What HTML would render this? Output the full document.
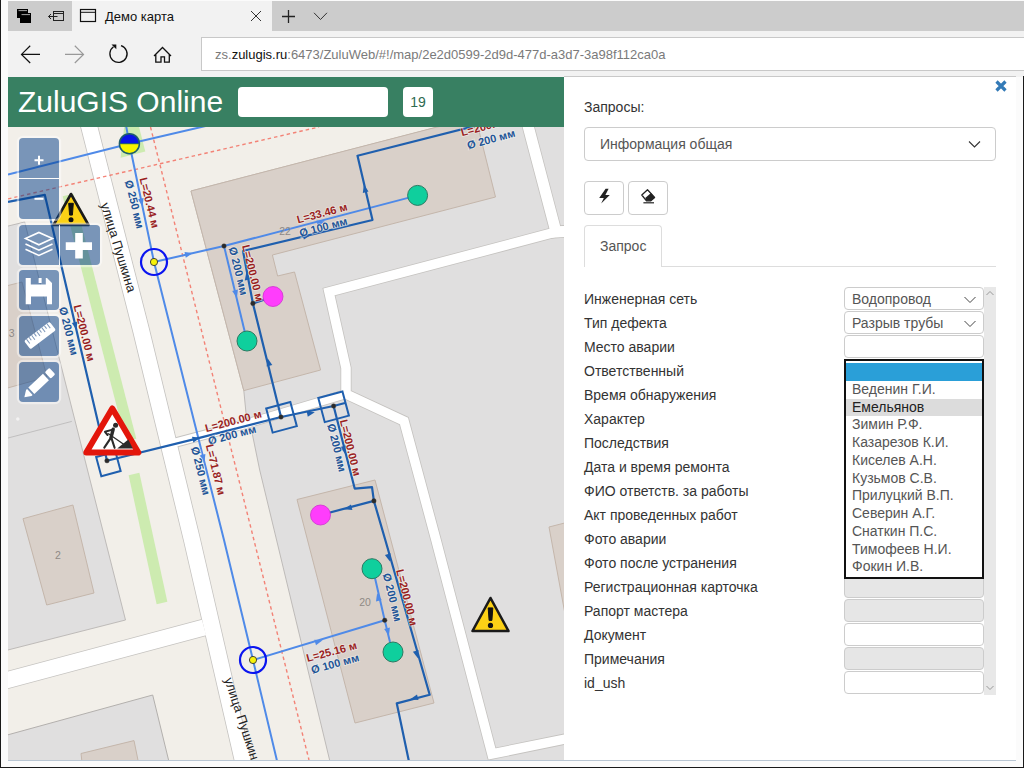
<!DOCTYPE html>
<html><head><meta charset="utf-8">
<style>
*{box-sizing:border-box}
html,body{margin:0;padding:0;width:1024px;height:768px;overflow:hidden;background:#fbfbfb;font-family:"Liberation Sans",sans-serif;}
.abs{position:absolute}
#tabbar{left:8px;top:1px;width:1016px;height:30px;background:#cccccc}
#acttab{left:72px;top:1px;width:200px;height:30px;background:#f2f2f2}
#nav{left:8px;top:31px;width:1016px;height:46px;background:#f2f2f2}
#addr{left:201px;top:37px;width:830px;height:34px;background:#fff;border:1px solid #c8c8c8;border-right:none}
#url{left:215px;top:47px;font-size:13px;color:#7a7a7a;white-space:nowrap;line-height:16px}
#url b{font-weight:normal;color:#111}
#header{left:8px;top:77px;width:556px;height:50px;background:#388062}
#logo{left:18px;top:84px;font-size:30px;color:#fff;line-height:36px;white-space:nowrap}
#search{left:238px;top:87px;width:150px;height:30px;background:#fff;border-radius:4px}
#cnt{left:403px;top:87px;width:30px;height:30px;background:#fff;border-radius:4px;font-size:14px;color:#2e6a50;text-align:center;line-height:30px}
#map{left:8px;top:127px;width:556px;height:633px;overflow:hidden;background:#f2efe9}
#panel{left:564px;top:76px;width:452px;height:684px;background:#fff;border-top:1px solid #c9c9c9}
#bottomline{left:8px;top:760px;width:1008px;height:1px;background:#b9c6d3}
#frameL{left:0;top:0;width:1px;height:768px;background:#1a1a1a}
#frameB{left:0;top:767px;width:1024px;height:1px;background:#1a1a1a}
#frameR{left:1023px;top:76px;width:1px;height:692px;background:#1a1a1a}
.lbl{position:absolute;left:584px;font-size:14px;color:#333;line-height:16px;white-space:nowrap}
.inp{position:absolute;left:844px;width:140px;height:23px;background:#fff;border:1px solid #ccc;border-radius:4px}
.inp.g{background:#e6e6e6}
.sel{font-size:14px;color:#555;line-height:21px;padding-top:1px;padding-left:7px;white-space:nowrap}
.btn{width:40px;height:34px;border:1px solid #ccc;border-radius:4px;background:#fff}
.chev{position:absolute;right:7px;top:8px}
#dd{left:844px;top:359px;width:140px;height:220px;border:2px solid #111;background:#fff}
.opt{position:absolute;left:0;width:136px;height:17.75px;font-size:14px;line-height:16.5px;color:#555;padding-left:6px;white-space:nowrap}
.opt.sel0{background:#2a9fd8;top:2px}
.opt.hov{background:#dcdcdc;color:#222}
</style></head><body>
<div id="frameL" class="abs"></div>
<div id="tabbar" class="abs"></div>
<div id="acttab" class="abs"></div>
<div id="nav" class="abs"></div>
<div id="addr" class="abs"></div>
<div id="url" class="abs">zs.<b>zulugis.ru</b>:6473/ZuluWeb/#!/map/2e2d0599-2d9d-477d-a3d7-3a98f112ca0a</div>
<div class="abs" style="left:105px;top:9px;font-size:13px;color:#111;line-height:15px;white-space:nowrap">Демо карта</div>

<svg class="abs" style="left:0;top:0" width="340" height="76" viewBox="0 0 340 76">
 <!-- tab group icon -->
 <rect x="17.5" y="9.5" width="10" height="8" fill="#000" stroke="#000" stroke-width="1"/>
 <rect x="20.5" y="13.5" width="10" height="9" fill="#000" stroke="#000" stroke-width="1"/>
 <line x1="18.5" y1="10.6" x2="27" y2="10.6" stroke="#ccc" stroke-width="0.8"/>
 <line x1="21.5" y1="14.6" x2="30" y2="14.6" stroke="#ccc" stroke-width="0.8"/>
 <!-- set aside icon -->
 <rect x="53.5" y="11.5" width="10" height="9" fill="none" stroke="#222" stroke-width="1"/>
 <line x1="53.5" y1="13.5" x2="63.5" y2="13.5" stroke="#222" stroke-width="1"/>
 <line x1="48.5" y1="16.5" x2="57.5" y2="16.5" stroke="#222" stroke-width="1"/>
 <polyline points="51,14 48.5,16.5 51,19" fill="none" stroke="#222" stroke-width="1"/>
 <!-- favicon -->
 <rect x="80.5" y="9.5" width="15" height="12" fill="none" stroke="#111" stroke-width="1.2"/>
 <line x1="80.5" y1="12.3" x2="95.5" y2="12.3" stroke="#111" stroke-width="1"/>
 <!-- tab close -->
 <path d="M251 11 L261 21 M261 11 L251 21" stroke="#333" stroke-width="1"/>
 <!-- plus -->
 <path d="M282 16.5 H295 M288.5 10 V23" stroke="#222" stroke-width="1.3"/>
 <!-- chevron -->
 <polyline points="314,12.8 320.5,19.5 327,12.8" fill="none" stroke="#333" stroke-width="1"/>
 <!-- back -->
 <path d="M21.5 54.4 H40 M30.2 45.8 L21.5 54.4 L30.2 63" fill="none" stroke="#111" stroke-width="1.2"/>
 <!-- forward -->
 <path d="M65 54.4 H83.5 M74.8 45.8 L83.5 54.4 L74.8 63" fill="none" stroke="#999" stroke-width="1.2"/>
 <!-- refresh -->
 <path d="M121 45.6 A8.6 8.6 0 1 1 113.5 46.8" fill="none" stroke="#111" stroke-width="1.3"/>
 <polygon points="111.5,44.6 116.3,44.6 116.3,49.2" fill="#111"/>
 <!-- home -->
 <path d="M154 56 L162.5 47.5 L171 56 M155.8 54.5 V62.2 H161 V56.8 H164.5 V62.2 H169.3 V54.5" fill="none" stroke="#111" stroke-width="1.3"/>
</svg>

<div id="header" class="abs"></div>
<div id="logo" class="abs">ZuluGIS Online</div>
<div id="search" class="abs"></div>
<div id="cnt" class="abs">19</div>

<div id="map" class="abs"><svg id="mapsvg" width="556" height="633" viewBox="8 127 556 633" style="position:absolute;left:0;top:0;font-family:Liberation Sans,sans-serif">
<rect x="8" y="127" width="557" height="633" fill="#f2efe9"/>
<polygon points="0.0,228.0 24.7,222.0 125.5,620.0 0.0,652.0" fill="#e0dfdf" stroke="#b9b6b3" stroke-width="0.9"/>
<polygon points="191.0,191.0 461.0,121.0 570.0,121.0 570.0,770.0 332.0,770.0 259.7,470.0 252.0,432.5 246.0,413.0 243.8,390.6" fill="#e0dfdf" stroke="#b9b6b3" stroke-width="0.9"/>
<polygon points="0.0,737.0 152.7,695.0 171.0,770.0 0.0,770.0" fill="#e0dfdf" stroke="#b3b0ad" stroke-width="1"/>
<line x1="8" y1="438" x2="71.8" y2="421.4" stroke="#b8b6b6" stroke-width="0.8"/>
<polygon points="191.0,191.0 437.0,127.0 476.3,120.0 495.5,197.0 272.4,255.0 277.6,276.0 294.5,272.0 320.6,370.0 243.8,390.6" fill="#d9d0c9" stroke="#c4b6ab" stroke-width="1" />
<polygon points="297.0,499.5 375.0,480.0 434.0,703.0 355.0,723.0" fill="#d9d0c9" stroke="#c4b6ab" stroke-width="1" />
<polygon points="23.0,518.7 72.9,505.0 94.0,593.0 46.7,605.0" fill="#d9d0c9" stroke="#c4b6ab" stroke-width="1" />
<polygon points="4.0,286.5 22.0,282.0 47.0,377.0 4.0,389.0" fill="#d9d0c9" stroke="#c4b6ab" stroke-width="1" />
<polygon points="549.0,527.0 600.0,514.0 620.0,600.0 565.0,614.0" fill="#d9d0c9" stroke="#c4b6ab" stroke-width="1" />
<polygon points="81.0,753.5 134.0,740.6 140.0,770.0 84.0,780.0" fill="#d9d0c9" stroke="#c4b6ab" stroke-width="1" />
<line x1="68" y1="195" x2="131" y2="440" stroke="#cdebb0" stroke-width="11"/>
<line x1="134" y1="474" x2="162" y2="603" stroke="#cdebb0" stroke-width="11"/>
<polygon points="120.6,157.8 145.3,151.6 137.3,120.0 125.0,120.0" fill="#cdebb0"/>
<polyline points="87.5,120.0 141.0,330.0 192.0,540.0 245.0,770.0" fill="none" stroke="#c5c3c0" stroke-width="17.6" stroke-linejoin="miter"/>
<polyline points="526.5,120.0 556.0,232.0 570.0,231.0" fill="none" stroke="#c5c3c0" stroke-width="12.6" stroke-linejoin="miter"/>
<polyline points="570.0,230.0 556.0,232.0 329.0,292.0 346.0,368.0 346.0,394.0 404.0,421.0 436.0,540.0 492.0,754.0 570.0,738.0" fill="none" stroke="#c5c3c0" stroke-width="11.1" stroke-linejoin="miter"/>
<polyline points="346.0,394.0 242.0,425.0 170.0,444.0" fill="none" stroke="#c5c3c0" stroke-width="10.1" stroke-linejoin="miter"/>
<polyline points="0.0,682.0 204.0,627.5" fill="none" stroke="#c5c3c0" stroke-width="17.6" stroke-linejoin="miter"/>
<polyline points="87.5,120.0 141.0,330.0 192.0,540.0 245.0,770.0" fill="none" stroke="#ffffff" stroke-width="16" stroke-linejoin="miter"/>
<polyline points="526.5,120.0 556.0,232.0 570.0,231.0" fill="none" stroke="#ffffff" stroke-width="11" stroke-linejoin="miter"/>
<polyline points="570.0,230.0 556.0,232.0 329.0,292.0 346.0,368.0 346.0,394.0 404.0,421.0 436.0,540.0 492.0,754.0 570.0,738.0" fill="none" stroke="#ffffff" stroke-width="9.5" stroke-linejoin="miter"/>
<polyline points="346.0,394.0 242.0,425.0 170.0,444.0" fill="none" stroke="#ffffff" stroke-width="8.5" stroke-linejoin="miter"/>
<polyline points="0.0,682.0 204.0,627.5" fill="none" stroke="#ffffff" stroke-width="16" stroke-linejoin="miter"/>
<line x1="150.5" y1="127" x2="309" y2="760" stroke="#f4776a" stroke-width="1.4" stroke-dasharray="3.5 3" opacity="0.9"/>
<line x1="8" y1="198.9" x2="319" y2="127" stroke="#f4776a" stroke-width="1.4" stroke-dasharray="3.5 3" opacity="0.9"/>
<polyline points="8.0,174.5 129.4,143.7 210.0,125.0" fill="none" stroke="#4f8ae8" stroke-width="2" stroke-linejoin="round"/>
<polyline points="125.0,120.0 129.4,143.7 154.0,262.0 224.0,540.0 253.0,660.0 278.0,765.0" fill="none" stroke="#4f8ae8" stroke-width="2" stroke-linejoin="round"/>
<polyline points="154.0,262.0 224.0,246.0 417.6,195.4" fill="none" stroke="#4f8ae8" stroke-width="2" stroke-linejoin="round"/>
<polyline points="224.0,246.0 247.0,341.0" fill="none" stroke="#4f8ae8" stroke-width="2" stroke-linejoin="round"/>
<polyline points="253.0,660.0 384.7,620.3" fill="none" stroke="#4f8ae8" stroke-width="2" stroke-linejoin="round"/>
<polyline points="375.0,578.0 384.7,620.3 390.0,642.0" fill="none" stroke="#4f8ae8" stroke-width="2" stroke-linejoin="round"/>
<polyline points="8.0,201.9 44.8,194.8 107.0,460.7" fill="none" stroke="#1f5fae" stroke-width="2.2" stroke-linejoin="round"/>
<polyline points="107.0,460.7 196.5,438.6 281.0,417.0 333.6,406.0 345.0,403.0" fill="none" stroke="#1f5fae" stroke-width="2.2" stroke-linejoin="round"/>
<polyline points="281.0,417.0 252.9,303.4 243.0,251.0 372.5,220.0 357.5,155.7 480.0,124.7" fill="none" stroke="#1f5fae" stroke-width="2.2" stroke-linejoin="round"/>
<polyline points="252.9,303.4 272.4,296.9" fill="none" stroke="#1f5fae" stroke-width="2.2" stroke-linejoin="round"/>
<polyline points="333.6,406.0 354.7,488.6 372.0,487.2 373.9,500.9 385.3,540.0 429.7,694.8 396.8,703.4 409.7,765.0" fill="none" stroke="#1f5fae" stroke-width="2.2" stroke-linejoin="round"/>
<polyline points="373.9,500.9 320.5,515.0" fill="none" stroke="#1f5fae" stroke-width="2.2" stroke-linejoin="round"/>
<polygon points="142.4,206.3 137.9,199.3 143.7,198.1" fill="#4f8ae8"/>
<polygon points="192.8,253.1 185.8,257.7 184.5,252.0" fill="#4f8ae8"/>
<polygon points="236.9,297.8 232.2,290.9 237.9,289.5" fill="#4f8ae8"/>
<polygon points="322.6,640.3 316.0,645.3 314.3,639.7" fill="#4f8ae8"/>
<polygon points="204.5,462.3 199.7,455.4 205.4,454.0" fill="#4f8ae8"/>
<polygon points="324.8,221.5 317.9,226.3 316.5,220.6" fill="#4f8ae8"/>
<polygon points="377.1,593.2 381.7,600.1 376.0,601.5" fill="#4f8ae8"/>
<polygon points="388.9,635.8 384.2,628.9 389.9,627.5" fill="#4f8ae8"/>
<polygon points="76.4,329.8 71.8,322.9 77.5,321.5" fill="#1f5fae"/>
<polygon points="200.3,437.7 193.4,442.4 192.0,436.7" fill="#1f5fae"/>
<polygon points="314.8,412.2 307.8,416.7 306.6,410.9" fill="#1f5fae"/>
<polygon points="267.6,358.2 272.3,365.1 266.6,366.5" fill="#1f5fae"/>
<polygon points="246.3,272.2 250.6,279.3 244.8,280.4" fill="#1f5fae"/>
<polygon points="310.8,234.9 303.9,239.6 302.5,233.9" fill="#1f5fae"/>
<polygon points="363.9,184.7 368.5,191.6 362.8,193.0" fill="#1f5fae"/>
<polygon points="345.0,453.8 340.2,446.9 345.9,445.5" fill="#1f5fae"/>
<polygon points="344.1,509.3 350.9,504.5 352.4,510.1" fill="#1f5fae"/>
<polygon points="389.9,561.5 384.9,554.9 390.5,553.2" fill="#1f5fae"/>
<polygon points="417.9,658.3 412.9,651.7 418.5,650.0" fill="#1f5fae"/>
<polygon points="410.2,699.2 417.0,694.4 418.5,700.0" fill="#1f5fae"/>
<rect x="98.4" y="454.0" width="20" height="20" fill="none" stroke="#1f5fae" stroke-width="2" transform="rotate(-15 108.4 464)"/>
<rect x="269.0" y="404.8" width="25" height="25" fill="none" stroke="#1f5fae" stroke-width="2" transform="rotate(-15 281.5 417.3)"/>
<rect x="321.1" y="394.3" width="25" height="25" fill="none" stroke="#1f5fae" stroke-width="2" transform="rotate(-15 333.6 406.8)"/>
<circle cx="417.6" cy="195.4" r="10" fill="#0fcf9d" stroke="#2a7a62" stroke-width="1"/>
<circle cx="247" cy="341" r="10" fill="#0fcf9d" stroke="#2a7a62" stroke-width="1"/>
<circle cx="372" cy="568.7" r="10" fill="#0fcf9d" stroke="#2a7a62" stroke-width="1"/>
<circle cx="393" cy="652" r="10" fill="#0fcf9d" stroke="#2a7a62" stroke-width="1"/>
<circle cx="273" cy="296.5" r="10" fill="#ff3dfc" stroke="#d02fd0" stroke-width="0.8"/>
<circle cx="320.5" cy="515" r="10" fill="#ff3dfc" stroke="#d02fd0" stroke-width="0.8"/>
<circle cx="154" cy="262" r="13" fill="none" stroke="#0a14f0" stroke-width="2.2"/>
<circle cx="154" cy="262" r="3.6" fill="#f6f20a" stroke="#333" stroke-width="0.9"/>
<circle cx="253" cy="660" r="13" fill="none" stroke="#0a14f0" stroke-width="2.2"/>
<circle cx="253" cy="660" r="3.6" fill="#f6f20a" stroke="#333" stroke-width="0.9"/>
<g><circle cx="129.4" cy="143.7" r="10" fill="#f7f300"/><path d="M119.4 143.7 A10 10 0 0 1 139.4 143.7 Z" fill="#0a14e6"/><circle cx="129.4" cy="143.7" r="10" fill="none" stroke="#1e5e6e" stroke-width="1.5"/><line x1="119.4" y1="143.7" x2="139.4" y2="143.7" stroke="#1e5e6e" stroke-width="1"/></g>
<circle cx="224" cy="246" r="2.3" fill="#2a2a2a" stroke="#444" stroke-width="0.4"/>
<circle cx="252.9" cy="303.4" r="2.3" fill="#2a2a2a" stroke="#444" stroke-width="0.4"/>
<circle cx="281" cy="417" r="2.3" fill="#2a2a2a" stroke="#444" stroke-width="0.4"/>
<circle cx="333.6" cy="406" r="2.3" fill="#2a2a2a" stroke="#444" stroke-width="0.4"/>
<circle cx="373.9" cy="500.9" r="2.3" fill="#2a2a2a" stroke="#444" stroke-width="0.4"/>
<circle cx="384.7" cy="620.3" r="2.3" fill="#2a2a2a" stroke="#444" stroke-width="0.4"/>
<circle cx="107" cy="460.7" r="2.3" fill="#2a2a2a" stroke="#444" stroke-width="0.4"/>
<text x="149.6" y="202.6" fill="#9a1f1f" font-size="11" font-weight="bold" text-anchor="middle" dominant-baseline="central" transform="rotate(76 149.6 202.6)" style="paint-order:stroke" stroke="#f7f5f0" stroke-width="1.5" stroke-opacity="0.6">L=20.44 м</text>
<text x="134.7" y="204.3" fill="#1f5597" font-size="11" font-weight="bold" text-anchor="middle" dominant-baseline="central" transform="rotate(76 134.7 204.3)" style="paint-order:stroke" stroke="#f7f5f0" stroke-width="1.5" stroke-opacity="0.6">Ø 250 мм</text>
<text x="322" y="213" fill="#9a1f1f" font-size="11" font-weight="bold" text-anchor="middle" dominant-baseline="central" transform="rotate(-15 322 213)" style="paint-order:stroke" stroke="#f7f5f0" stroke-width="1.5" stroke-opacity="0.6">L=33.46 м</text>
<text x="323.3" y="226.8" fill="#1f5597" font-size="11" font-weight="bold" text-anchor="middle" dominant-baseline="central" transform="rotate(-15 323.3 226.8)" style="paint-order:stroke" stroke="#f7f5f0" stroke-width="1.5" stroke-opacity="0.6">Ø 100 мм</text>
<text x="489" y="125" fill="#9a1f1f" font-size="11" font-weight="bold" text-anchor="middle" dominant-baseline="central" transform="rotate(-15 489 125)" style="paint-order:stroke" stroke="#f7f5f0" stroke-width="1.5" stroke-opacity="0.6">L=200.00 м</text>
<text x="491" y="139" fill="#1f5597" font-size="11" font-weight="bold" text-anchor="middle" dominant-baseline="central" transform="rotate(-15 491 139)" style="paint-order:stroke" stroke="#f7f5f0" stroke-width="1.5" stroke-opacity="0.6">Ø 200 мм</text>
<text x="253" y="273" fill="#9a1f1f" font-size="11" font-weight="bold" text-anchor="middle" dominant-baseline="central" transform="rotate(76 253 273)" style="paint-order:stroke" stroke="#f7f5f0" stroke-width="1.5" stroke-opacity="0.6">L=200.00 м</text>
<text x="238.5" y="271" fill="#1f5597" font-size="11" font-weight="bold" text-anchor="middle" dominant-baseline="central" transform="rotate(76 238.5 271)" style="paint-order:stroke" stroke="#f7f5f0" stroke-width="1.5" stroke-opacity="0.6">Ø 200 мм</text>
<text x="233.3" y="420.8" fill="#9a1f1f" font-size="11" font-weight="bold" text-anchor="middle" dominant-baseline="central" transform="rotate(-15 233.3 420.8)" style="paint-order:stroke" stroke="#f7f5f0" stroke-width="1.5" stroke-opacity="0.6">L=200.00 м</text>
<text x="232" y="434.8" fill="#1f5597" font-size="11" font-weight="bold" text-anchor="middle" dominant-baseline="central" transform="rotate(-15 232 434.8)" style="paint-order:stroke" stroke="#f7f5f0" stroke-width="1.5" stroke-opacity="0.6">Ø 200 мм</text>
<text x="215.8" y="469.5" fill="#9a1f1f" font-size="11" font-weight="bold" text-anchor="middle" dominant-baseline="central" transform="rotate(76 215.8 469.5)" style="paint-order:stroke" stroke="#f7f5f0" stroke-width="1.5" stroke-opacity="0.6">L=71.87 м</text>
<text x="200.8" y="470.8" fill="#1f5597" font-size="11" font-weight="bold" text-anchor="middle" dominant-baseline="central" transform="rotate(76 200.8 470.8)" style="paint-order:stroke" stroke="#f7f5f0" stroke-width="1.5" stroke-opacity="0.6">Ø 250 мм</text>
<text x="350.6" y="447.6" fill="#9a1f1f" font-size="11" font-weight="bold" text-anchor="middle" dominant-baseline="central" transform="rotate(76 350.6 447.6)" style="paint-order:stroke" stroke="#f7f5f0" stroke-width="1.5" stroke-opacity="0.6">L=200.00 м</text>
<text x="337" y="447.6" fill="#1f5597" font-size="11" font-weight="bold" text-anchor="middle" dominant-baseline="central" transform="rotate(76 337 447.6)" style="paint-order:stroke" stroke="#f7f5f0" stroke-width="1.5" stroke-opacity="0.6">Ø 200 мм</text>
<text x="407" y="597.3" fill="#9a1f1f" font-size="11" font-weight="bold" text-anchor="middle" dominant-baseline="central" transform="rotate(76 407 597.3)" style="paint-order:stroke" stroke="#f7f5f0" stroke-width="1.5" stroke-opacity="0.6">L=200.00 м</text>
<text x="392.5" y="597.3" fill="#1f5597" font-size="11" font-weight="bold" text-anchor="middle" dominant-baseline="central" transform="rotate(76 392.5 597.3)" style="paint-order:stroke" stroke="#f7f5f0" stroke-width="1.5" stroke-opacity="0.6">Ø 200 мм</text>
<text x="331.5" y="651.5" fill="#9a1f1f" font-size="11" font-weight="bold" text-anchor="middle" dominant-baseline="central" transform="rotate(-15 331.5 651.5)" style="paint-order:stroke" stroke="#f7f5f0" stroke-width="1.5" stroke-opacity="0.6">L=25.16 м</text>
<text x="335" y="663.5" fill="#1f5597" font-size="11" font-weight="bold" text-anchor="middle" dominant-baseline="central" transform="rotate(-15 335 663.5)" style="paint-order:stroke" stroke="#f7f5f0" stroke-width="1.5" stroke-opacity="0.6">Ø 100 мм</text>
<text x="84.5" y="332.9" fill="#9a1f1f" font-size="11" font-weight="bold" text-anchor="middle" dominant-baseline="central" transform="rotate(76 84.5 332.9)" style="paint-order:stroke" stroke="#f7f5f0" stroke-width="1.5" stroke-opacity="0.6">L=200.00 м</text>
<text x="68.9" y="331" fill="#1f5597" font-size="11" font-weight="bold" text-anchor="middle" dominant-baseline="central" transform="rotate(76 68.9 331)" style="paint-order:stroke" stroke="#f7f5f0" stroke-width="1.5" stroke-opacity="0.6">Ø 200 мм</text>
<text x="118.5" y="247.5" fill="#222" font-size="13" text-anchor="middle" dominant-baseline="central" transform="rotate(73 118.5 247.5)">улица Пушкина</text>
<text x="243" y="722" fill="#222" font-size="13" text-anchor="middle" dominant-baseline="central" transform="rotate(72 243 722)">улица Пушкина</text>
<text x="285" y="231" fill="#8f8a86" font-size="10.5" text-anchor="middle" dominant-baseline="central">22</text>
<text x="365" y="601.6" fill="#8f8a86" font-size="10.5" text-anchor="middle" dominant-baseline="central">20</text>
<text x="58" y="555" fill="#8f8a86" font-size="10.5" text-anchor="middle" dominant-baseline="central">2</text>
<text x="11.6" y="333" fill="#8f8a86" font-size="10.5" text-anchor="middle" dominant-baseline="central">3</text>
<polygon points="71.0,194.0 88.5,225.0 53.5,225.0" fill="#fcd116" stroke="#1a1a1a" stroke-width="2.6" stroke-linejoin="round"/>
<path d="M68.7 203.3 L73.3 203.3 L72.4 215.1 L69.6 215.1 Z" fill="#111" stroke="#111" stroke-width="1" stroke-linejoin="round"/>
<circle cx="71" cy="219.7" r="2.5" fill="#111"/>
<polygon points="490.5,598.0 508.5,631.0 472.5,631.0" fill="#fcd116" stroke="#1a1a1a" stroke-width="2.6" stroke-linejoin="round"/>
<path d="M488.2 607.9 L492.8 607.9 L491.9 620.4 L489.1 620.4 Z" fill="#111" stroke="#111" stroke-width="1" stroke-linejoin="round"/>
<circle cx="490.5" cy="625.4" r="2.6" fill="#111"/>
<polygon points="112.3,408.5 138.3,452.6 86.3,452.6" fill="#fff" stroke="#e3160b" stroke-width="6" stroke-linejoin="round"/>
<g stroke="#2b2b2b" fill="none" stroke-linecap="round" stroke-linejoin="round"><circle cx="115.6" cy="425.3" r="2.5" fill="#2b2b2b" stroke="none"/><path d="M113.2 429.2 L111 437.6" stroke-width="3.4"/><path d="M112.6 429.6 L105 431.8 L107.6 435" stroke-width="2"/><path d="M111 437.6 L104.3 447.6 M111.3 437.6 L114.6 447.8" stroke-width="2.1"/><path d="M108.5 433.8 L124 444.5" stroke-width="1.3"/><polygon points="117.2,448.4 132.8,448.4 128.3,439.6" fill="#2b2b2b" stroke="none"/></g>
<rect x="18" y="137" width="42" height="83" rx="5" fill="none" stroke="rgba(255,255,255,0.45)" stroke-width="2.5"/>
<path d="M19 142 a4 4 0 0 1 4 -4 h32 a4 4 0 0 1 4 4 v36 h-40 z" fill="rgba(0,60,136,0.5)"/>
<path d="M19 179 h40 v36 a4 4 0 0 1 -4 4 h-32 a4 4 0 0 1 -4 -4 z" fill="rgba(0,60,136,0.5)"/>
<line x1="19" y1="178.5" x2="59" y2="178.5" stroke="rgba(255,255,255,0.8)" stroke-width="1"/>
<path d="M34.5 160.2 H43.5 M39 155.7 V164.7" stroke="#fff" stroke-width="2"/>
<path d="M34.5 198.8 H43.5" stroke="#fff" stroke-width="2"/>
<rect x="18" y="224" width="83" height="42" rx="5" fill="none" stroke="rgba(255,255,255,0.45)" stroke-width="2.5"/>
<path d="M19 229 a4 4 0 0 1 4 -4 h36 v40 h-36 a4 4 0 0 1 -4 -4 z" fill="rgba(0,60,136,0.5)"/>
<path d="M60 225 h36 a4 4 0 0 1 4 4 v32 a4 4 0 0 1 -4 4 h-36 z" fill="rgba(0,60,136,0.5)"/>
<line x1="59.5" y1="225" x2="59.5" y2="265" stroke="rgba(255,255,255,0.8)" stroke-width="1"/>
<path d="M25.5 238.6 L38.9 232.4 L52.5 238.6 L38.9 244.8 Z" fill="none" stroke="#fff" stroke-width="1.6" stroke-linejoin="miter"/>
<path d="M25.5 244 L38.9 250.2 L52.5 244" fill="none" stroke="#fff" stroke-width="1.6"/>
<path d="M25.5 249.2 L38.9 255.4 L52.5 249.2" fill="none" stroke="#fff" stroke-width="1.6"/>
<path d="M79 233 V258.6 M65.75 246.1 H92" stroke="#fff" stroke-width="7.6"/>
<rect x="18" y="269" width="42" height="42" rx="5" fill="none" stroke="rgba(255,255,255,0.45)" stroke-width="2.5"/>
<rect x="19" y="270" width="40" height="40" rx="4" fill="rgba(0,60,136,0.5)"/>
<path fill-rule="evenodd" fill="#fff" d="M25.7 278 H47 L52 283 V304.3 H25.7 Z M30.8 278 V284.5 H45.8 V278 Z M31 296.5 V304.3 H47 V296.5 Z"/>
<rect x="38.6" y="278" width="3" height="5" fill="#fff"/>
<rect x="18" y="315" width="42" height="42" rx="5" fill="none" stroke="rgba(255,255,255,0.45)" stroke-width="2.5"/>
<rect x="19" y="316" width="40" height="40" rx="4" fill="rgba(0,60,136,0.5)"/>
<g transform="translate(40 335.5) rotate(-37)"><rect x="-16" y="-5.2" width="32" height="10.4" rx="1.5" fill="#fff"/><line x1="-13.0" y1="-5.2" x2="-13.0" y2="0.3" stroke="#7b95b8" stroke-width="1"/><line x1="-9.8" y1="-5.2" x2="-9.8" y2="-1.5" stroke="#7b95b8" stroke-width="1"/><line x1="-6.6" y1="-5.2" x2="-6.6" y2="0.3" stroke="#7b95b8" stroke-width="1"/><line x1="-3.4" y1="-5.2" x2="-3.4" y2="-1.5" stroke="#7b95b8" stroke-width="1"/><line x1="-0.2" y1="-5.2" x2="-0.2" y2="0.3" stroke="#7b95b8" stroke-width="1"/><line x1="3.0" y1="-5.2" x2="3.0" y2="-1.5" stroke="#7b95b8" stroke-width="1"/><line x1="6.2" y1="-5.2" x2="6.2" y2="0.3" stroke="#7b95b8" stroke-width="1"/><line x1="9.4" y1="-5.2" x2="9.4" y2="-1.5" stroke="#7b95b8" stroke-width="1"/><line x1="12.6" y1="-5.2" x2="12.6" y2="0.3" stroke="#7b95b8" stroke-width="1"/></g>
<rect x="18" y="361" width="42" height="42" rx="5" fill="none" stroke="rgba(255,255,255,0.45)" stroke-width="2.5"/>
<rect x="19" y="362" width="40" height="40" rx="4" fill="rgba(0,60,136,0.5)"/>
<g transform="translate(39 383.5) rotate(-43)"><path d="M-20 0 L-14 -4 H-12.5 V4 H-14 Z" fill="#fff"/><rect x="-10.5" y="-4.4" width="20" height="8.8" fill="#fff"/><rect x="11.8" y="-4.4" width="6.5" height="8.8" rx="1.5" fill="#fff"/></g>
<circle cx="17.8" cy="419" r="1.8" fill="#fff" opacity="0.6"/>
</svg></div><!--endmap-->

<div id="panel" class="abs"></div>

<div class="abs" style="left:584px;top:99px;font-size:14px;color:#333;line-height:16px">Запросы:</div>
<div class="abs" style="left:584px;top:127px;width:412px;height:34px;border:1px solid #ccc;border-radius:4px;background:#fff"></div>
<div class="abs" style="left:600px;top:136px;font-size:14px;color:#555;line-height:16px">Информация общая</div>
<svg class="abs" style="left:968px;top:140px" width="14" height="9" viewBox="0 0 14 9"><polyline points="1,1.5 6.5,7 12,1.5" fill="none" stroke="#333" stroke-width="1.1"/></svg>
<div class="abs btn" style="left:584px;top:181px"></div>
<div class="abs btn" style="left:628px;top:181px"></div>
<svg class="abs" style="left:0;top:0;overflow:visible" width="1" height="1"><polygon points="605.6,188.8 608.6,188.8 605.4,194.9 609.8,194.9 601.2,203.4 603.8,197.9 599.2,197.9" fill="#222"/></svg>
<svg class="abs" style="left:0;top:0;overflow:visible" width="1" height="1"><path d="M641.8 195 L647.5 189.8 L654.6 197.4 L650.8 200.8 H646.5 Z" fill="#fff" stroke="#222" stroke-width="1.3" stroke-linejoin="round"/><path d="M645.2 198.1 L651 193 L654.6 197.4 L650.8 200.8 H646.5 Z" fill="#222"/><line x1="643.4" y1="202.8" x2="654" y2="202.8" stroke="#222" stroke-width="1.2"/></svg>
<div class="abs" style="left:584px;top:225px;width:78px;height:42px;border:1px solid #ddd;border-bottom:none;border-radius:4px 4px 0 0;background:#fff"></div>
<div class="abs" style="left:661px;top:266px;width:335px;height:1px;background:#ddd"></div>
<div class="abs" style="left:600px;top:238px;font-size:14px;color:#555;line-height:16px">Запрос</div>
<svg class="abs" style="left:994px;top:79px" width="14" height="14" viewBox="0 0 14 14"><path d="M2.5 2.5 L11.5 11.5 M11.5 2.5 L2.5 11.5" stroke="#337ab7" stroke-width="3.2" stroke-linecap="butt"/></svg>
<div class="abs" style="left:984px;top:287px;width:12px;height:408px;background:#e8e8e8"></div>
<svg class="abs" style="left:985px;top:289px" width="10" height="8" viewBox="0 0 10 8"><polyline points="1.5,6 5,2.5 8.5,6" fill="none" stroke="#999" stroke-width="1"/></svg>
<svg class="abs" style="left:985px;top:684px" width="10" height="8" viewBox="0 0 10 8"><polyline points="1.5,2 5,5.5 8.5,2" fill="none" stroke="#999" stroke-width="1"/></svg>
<div class="lbl" style="top:291px">Инженерная сеть</div>
<div class="lbl" style="top:315px">Тип дефекта</div>
<div class="lbl" style="top:339px">Место аварии</div>
<div class="lbl" style="top:363px">Ответственный</div>
<div class="lbl" style="top:387px">Время обнаружения</div>
<div class="lbl" style="top:411px">Характер</div>
<div class="lbl" style="top:435px">Последствия</div>
<div class="lbl" style="top:459px">Дата и время ремонта</div>
<div class="lbl" style="top:483px">ФИО ответств. за работы</div>
<div class="lbl" style="top:507px">Акт проведенных работ</div>
<div class="lbl" style="top:531px">Фото аварии</div>
<div class="lbl" style="top:555px">Фото после устранения</div>
<div class="lbl" style="top:579px">Регистрационная карточка</div>
<div class="lbl" style="top:603px">Рапорт мастера</div>
<div class="lbl" style="top:627px">Документ</div>
<div class="lbl" style="top:651px">Примечания</div>
<div class="lbl" style="top:675px">id_ush</div>
<div class="inp" style="top:287px"><div class="sel">Водопровод</div><svg class="chev" width="12" height="8" viewBox="0 0 12 8"><polyline points="0.5,1 6,6.5 11.5,1" fill="none" stroke="#444" stroke-width="1"/></svg></div>
<div class="inp" style="top:311px"><div class="sel">Разрыв трубы</div><svg class="chev" width="12" height="8" viewBox="0 0 12 8"><polyline points="0.5,1 6,6.5 11.5,1" fill="none" stroke="#444" stroke-width="1"/></svg></div>
<div class="inp" style="top:335px"></div>
<div class="inp" style="top:359px"></div>
<div class="inp" style="top:383px"></div>
<div class="inp" style="top:407px"></div>
<div class="inp" style="top:431px"></div>
<div class="inp" style="top:455px"></div>
<div class="inp" style="top:479px"></div>
<div class="inp" style="top:503px"></div>
<div class="inp" style="top:527px"></div>
<div class="inp" style="top:551px"></div>
<div class="inp g" style="top:575px"></div>
<div class="inp g" style="top:599px"></div>
<div class="inp" style="top:623px"></div>
<div class="inp g" style="top:647px"></div>
<div class="inp" style="top:671px"></div>
<div id="dd" class="abs"><div class="opt sel0" style="top:2.00px"></div><div class="opt" style="top:19.75px">Веденин Г.И.</div><div class="opt hov" style="top:37.50px">Емельянов</div><div class="opt" style="top:55.25px">Зимин Р.Ф.</div><div class="opt" style="top:73.00px">Казарезов К.И.</div><div class="opt" style="top:90.75px">Киселев А.Н.</div><div class="opt" style="top:108.50px">Кузьмов С.В.</div><div class="opt" style="top:126.25px">Прилуцкий В.П.</div><div class="opt" style="top:144.00px">Северин А.Г.</div><div class="opt" style="top:161.75px">Снаткин П.С.</div><div class="opt" style="top:179.50px">Тимофеев Н.И.</div><div class="opt" style="top:197.25px">Фокин И.В.</div></div>

<div id="bottomline" class="abs"></div>
<div id="frameB" class="abs"></div>
<div id="frameR" class="abs"></div>
</body></html>
